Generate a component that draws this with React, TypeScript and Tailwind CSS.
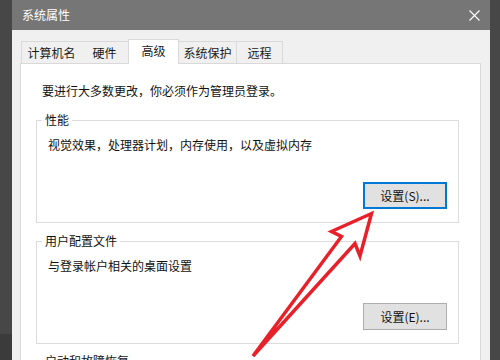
import React from 'react';

const font = "font-['Noto_Sans_CJK_SC',sans-serif]";

function Tabs() {
  const base = 'flex items-center justify-center text-[12px] text-[#1a1a1a] border-[#d9d9d9]';
  return (
    <div className="flex items-end h-[25px] -mb-[1px] relative z-10 pl-[1px]">
      <div className={`${base} w-[60px] h-[22px] mb-[1px] border-l border-t bg-[#f0f0f0]`}>计算机名</div>
      <div className={`${base} w-[47px] h-[22px] mb-[1px] border-t bg-[#f0f0f0]`}>硬件</div>
      <div className={`${base} w-[51px] h-[25px] pb-[3px] border-x border-t bg-white`}>高级</div>
      <div className={`${base} w-[58px] h-[22px] mb-[1px] border-t border-r bg-[#f0f0f0]`}>系统保护</div>
      <div className={`${base} w-[46px] h-[22px] mb-[1px] border-t border-r bg-[#f0f0f0]`}>远程</div>
    </div>
  );
}

function Group({ title, desc, button, focused, className }: { title: string; desc?: string; button?: string; focused?: boolean; className: string }) {
  return (
    <div className={`flex flex-col border border-[#dcdcdc] h-[103px] ${className}`}>
      <div className="-mt-[10px] ml-[5px] px-[3px] bg-white w-fit leading-[18px]">{title}</div>
      {desc && <div className="mt-[7px] pl-[11px] leading-[18px]">{desc}</div>}
      {button && (
        <button
          className={`mt-auto self-end mr-[11px] mb-[13px] w-[84px] h-[27px] bg-[#e1e1e1] text-[12px] leading-none ${
            focused ? 'border-2 border-[#0078d7]' : 'border border-[#adadad]'
          }`}
        >
          {button}
        </button>
      )}
    </div>
  );
}

export default function App() {
  return (
    <div className={`relative flex w-[500px] h-[360px] overflow-hidden bg-[#464646] ${font}`}>
      <div className="w-[12px] flex flex-col">
        <div className="flex-1 bg-[#474747]" />
        <div className="h-[26px] bg-[#3b3b3b]" />
      </div>

      <div className="w-[478px] flex flex-col">
        <div className="h-[30px] shrink-0 bg-[#767676] flex items-center justify-between pl-[10px] pr-[10px] text-white text-[12px]">
          <span>系统属性</span>
          <svg width="11" height="11" viewBox="0 0 11 11">
            <path d="M0.5 0.5 L10.5 10.5 M10.5 0.5 L0.5 10.5" stroke="#ffffff" strokeWidth="1.1" />
          </svg>
        </div>

        <div className="flex-1 bg-[#f0f0f0] pt-[9px] pl-[8px] pr-[9px] flex flex-col">
          <Tabs />
          <div className="flex-1 bg-white border border-[#d9d9d9] pl-[15px] pr-[21px] pt-[18px] text-[12px] text-[#111]">
            <div className="pl-[6px] leading-[18px]">要进行大多数更改，你必须作为管理员登录。</div>
            <Group
              className="mt-[20px]"
              title="性能"
              desc="视觉效果，处理器计划，内存使用，以及虚拟内存"
              button="设置(S)..."
              focused
            />
            <Group
              className="mt-[18px]"
              title="用户配置文件"
              desc="与登录帐户相关的桌面设置"
              button="设置(E)..."
            />
            <Group className="mt-[17px]" title="启动和故障恢复" />
          </div>
        </div>
      </div>

      <div className="w-[10px] bg-[#474747]" />

      <svg className="absolute inset-0 pointer-events-none" width="500" height="360" viewBox="0 0 500 360">
        <polygon
          points="253,356 341.5,236.5 331.5,231.5 371.5,213.5 360,256 355,243.5"
          fill="none"
          stroke="#e8202a"
          strokeWidth="3.5"
          strokeLinejoin="miter"
        />
      </svg>
    </div>
  );
}
